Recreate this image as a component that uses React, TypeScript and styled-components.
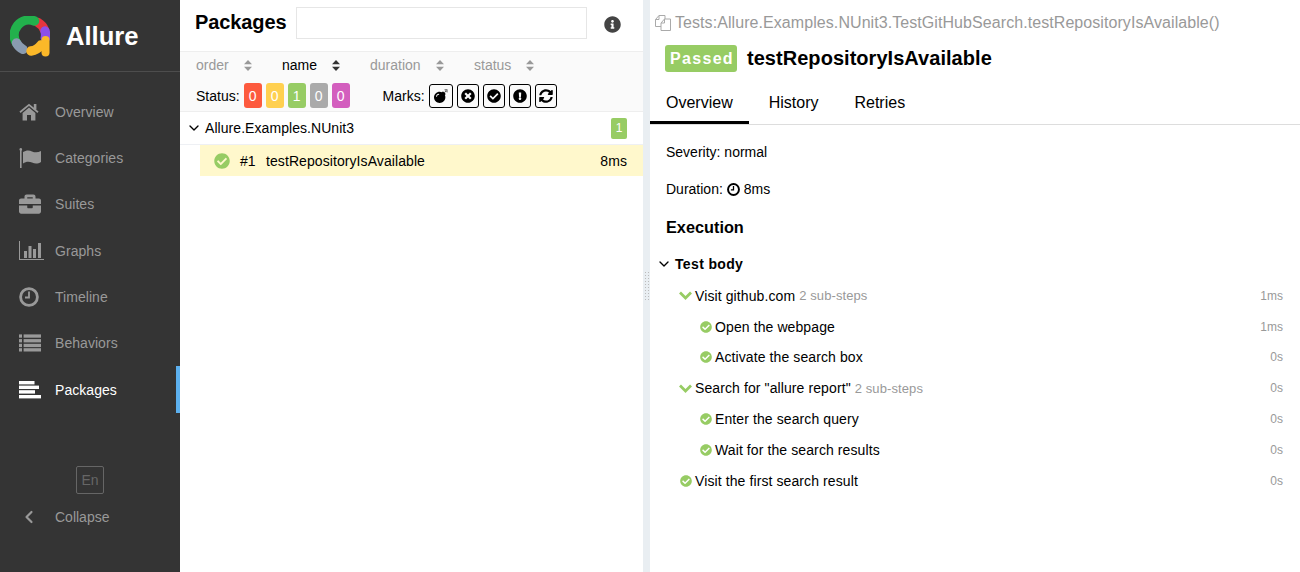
import React from 'react';
import styled, { createGlobalStyle } from 'styled-components';
import {
    FaBomb,
    FaBriefcase,
    FaCheckCircle,
    FaExclamationCircle,
    FaInfoCircle,
    FaSyncAlt,
    FaTimesCircle,
} from 'react-icons/fa';
import { FiChevronDown, FiChevronLeft } from 'react-icons/fi';

const GlobalStyle = createGlobalStyle`
    html, body, #root {
        margin: 0;
        height: 100%;
    }

    body {
        font-family: "Liberation Sans", Arial, sans-serif;
        font-size: 14px;
        color: #000;
        background: #fff;
    }
`;

const Page = styled.div`
    display: flex;
    width: 1300px;
    height: 572px;
    overflow: hidden;
`;

const Sidebar = styled.aside`
    display: flex;
    flex-direction: column;
    flex: 0 0 180px;
    background: #343434;
`;

const Brand = styled.div`
    display: flex;
    align-items: center;
    gap: 16px;
    height: 72px;
    padding: 2px 0 0 10px;
    box-sizing: border-box;
    border-bottom: 1px solid #4d4d4d;
    color: #fff;
    font-size: 25.6px;
    font-weight: bold;
`;

const Menu = styled.nav`
    display: flex;
    flex-direction: column;
    padding-top: 16.5px;
`;

const MenuItem = styled.div<{ $active?: boolean }>`
    display: flex;
    align-items: center;
    height: 46.33px;
    padding-left: 19px;
    box-sizing: border-box;
    color: ${props => (props.$active ? '#fff' : '#999')};
    letter-spacing: 0.05px;
    border-right: 4px solid ${props => (props.$active ? '#5cb0ee' : 'transparent')};
`;

const MenuIcon = styled.span`
    display: flex;
    align-items: center;
    width: 36px;
    font-size: 22px;
`;

const SidebarFooter = styled.div`
    display: flex;
    flex-direction: column;
    align-items: center;
    margin-top: auto;
    padding-bottom: 45px;
`;

const LangButton = styled.div`
    display: flex;
    align-items: center;
    justify-content: center;
    width: 26px;
    height: 26px;
    border: 1px solid #666;
    border-radius: 2px;
    color: #666;
    font-size: 14px;
`;

const CollapseRow = styled.div`
    display: flex;
    align-items: center;
    align-self: stretch;
    height: 20px;
    margin-top: 13px;
    padding-left: 19px;
    color: #999;
`;

const CollapseIcon = styled.span`
    display: flex;
    width: 36px;
    font-size: 20px;

    svg {
        stroke-width: 2.6;
    }
`;

const TreePane = styled.section`
    display: flex;
    flex-direction: column;
    flex: 0 0 463px;
`;

const TreeHeader = styled.header`
    display: flex;
    align-items: flex-start;
    height: 51px;
    padding: 7px 0 0 15px;
    box-sizing: border-box;
`;

const TreeTitle = styled.h2`
    width: 101px;
    margin: 0;
    font-size: 20px;
    font-weight: bold;
    line-height: 30px;
    letter-spacing: -0.1px;
`;

const SearchBox = styled.input`
    width: 291px;
    height: 32px;
    padding: 0;
    box-sizing: border-box;
    border: 1px solid #e6e6e6;
    background: #fff;
`;

const InfoButton = styled.span`
    display: flex;
    margin: 9px 0 0 17px;
    color: #444;
    font-size: 17px;
`;

const Controls = styled.div`
    height: 61px;
    box-sizing: border-box;
    background: #fafafa;
    border-top: 1px solid #eee;
    border-bottom: 1px solid #eee;
`;

const SortRow = styled.div`
    display: flex;
    align-items: center;
    height: 26px;
`;

const SortItem = styled.span<{ $active?: boolean; $width: number; $gap: number }>`
    display: flex;
    align-items: center;
    justify-content: space-between;
    width: ${props => props.$width}px;
    margin-left: ${props => props.$gap}px;
    color: ${props => (props.$active ? '#000' : '#999')};

    svg {
        color: ${props => (props.$active ? '#333' : '#999')};
    }
`;

const FilterRow = styled.div`
    display: flex;
    align-items: center;
    height: 33px;
    padding: 2px 0 0 16px;
    box-sizing: border-box;
`;

const FilterLabel = styled.span<{ $gap?: number }>`
    margin-left: ${props => props.$gap ?? 0}px;
    margin-right: 4px;
`;

const StatusBadge = styled.span<{ $color: string }>`
    display: flex;
    align-items: center;
    justify-content: center;
    width: 18px;
    height: 25px;
    margin-right: 4px;
    border-radius: 3px;
    background: ${props => props.$color};
    color: #fff;
`;

const MarkButton = styled.span<{ $wide?: boolean }>`
    display: flex;
    align-items: center;
    justify-content: center;
    width: ${props => (props.$wide ? 24 : 22)}px;
    height: 24px;
    margin-right: 4px;
    box-sizing: border-box;
    border: 1px solid #000;
    border-radius: 3px;
    font-size: 14px;
`;

const GroupRow = styled.div`
    display: flex;
    align-items: center;
    height: 32px;
    padding-left: 6px;
    padding-right: 16px;
    letter-spacing: 0.06px;
    border-bottom: 1px solid #eef0f4;
`;

const Caret = styled.span`
    display: flex;
    width: 19px;
    font-size: 16px;
`;

const GroupCount = styled.span`
    display: flex;
    align-items: center;
    justify-content: center;
    width: 16px;
    height: 21px;
    margin-left: auto;
    border-radius: 2px;
    background: #97cc64;
    color: #fff;
    font-size: 12px;
`;

const TestRow = styled.div`
    display: flex;
    align-items: center;
    height: 31px;
    margin-left: 20px;
    padding: 0 16px 0 14px;
    background: #fff8cc;
    letter-spacing: 0.08px;
`;

const TestStatus = styled.span`
    display: flex;
    width: 26px;
    color: #97cc64;
    font-size: 16px;
`;

const TestOrder = styled.span`
    width: 26px;
`;

const TestDuration = styled.span`
    margin-left: auto;
`;

const Gutter = styled.div`
    position: relative;
    flex: 0 0 7px;
    background: #e9eef2;
`;

const GutterGrip = styled.div`
    position: absolute;
    top: 271px;
    left: 1px;
    width: 5px;
    height: 30px;
    background-image: radial-gradient(#bbb 1px, transparent 1px);
    background-size: 3px 3px;
`;

const DetailPane = styled.main`
    display: flex;
    flex-direction: column;
    flex: 1;
    min-width: 0;
`;

const BreadCrumb = styled.div`
    display: flex;
    align-items: center;
    gap: 4px;
    height: 20px;
    margin-top: 13px;
    padding-left: 5px;
    color: #999;
    font-size: 16px;
    letter-spacing: 0.07px;
`;

const TitleRow = styled.div`
    display: flex;
    align-items: center;
    gap: 10px;
    margin-top: 12px;
    padding-left: 15px;
`;

const PassedBadge = styled.span`
    display: flex;
    align-items: center;
    justify-content: center;
    width: 72px;
    height: 27px;
    padding: 1px 0 0 2px;
    box-sizing: border-box;
    border-radius: 3px;
    background: #97cc64;
    color: #fff;
    font-size: 16px;
    font-weight: bold;
    letter-spacing: 1.3px;
`;

const TestTitle = styled.h2`
    margin: 0;
    font-size: 20px;
    font-weight: bold;
    letter-spacing: 0.04px;
`;

const Tabs = styled.div`
    display: flex;
    height: 39px;
    margin-top: 13px;
    border-bottom: 1px solid #ddd;
`;

const Tab = styled.div<{ $active?: boolean }>`
    display: flex;
    align-items: center;
    justify-content: center;
    height: 39px;
    padding: 0 16px 0 ${props => (props.$active ? 16 : 20)}px;
    box-sizing: border-box;
    font-size: 16px;
    border-bottom: 3px solid ${props => (props.$active ? '#000' : 'transparent')};
`;

const Overview = styled.div`
    display: flex;
    flex-direction: column;
    padding: 17px 17px 0 16px;
`;

const InfoLine = styled.div`
    display: flex;
    align-items: center;
    gap: 4px;
    height: 20px;
    margin-bottom: 17px;

    & + & {
        margin-bottom: 18px;
    }
`;

const SectionTitle = styled.h3`
    margin: 0;
    font-size: 16.3px;
    font-weight: bold;
    height: 20px;
    line-height: 20px;
`;

const BodyHeader = styled.div`
    display: flex;
    align-items: center;
    height: 20px;
    margin: 17px 0 11.8px -10px;
    font-weight: bold;
    letter-spacing: 0.35px;
`;

const StepRow = styled.div<{ $depth: number }>`
    display: flex;
    align-items: center;
    height: 20px;
    margin-bottom: 10.8px;
    padding-left: ${props => 13 + props.$depth * 20}px;
    letter-spacing: 0.1px;
`;

const StepIcon = styled.span`
    display: flex;
    justify-content: center;
    width: 13px;
    margin-right: 3px;
    color: #97cc64;
    font-size: 12px;
`;

const SubSteps = styled.span`
    margin-left: 4px;
    color: #999;
    font-size: 13px;
`;

const StepTime = styled.span`
    margin-left: auto;
    color: #999;
    font-size: 12px;
    letter-spacing: 0;
`;

function HomeIcon(): JSX.Element {
    return (
        <svg width="20" height="18" viewBox="0 0 20 18" fill="currentColor">
            <path d="M1 9.2 L10 1.8 L19 9.2" fill="none" stroke="currentColor" strokeWidth="1.8" />
            <rect x="14.8" y="1" width="2.6" height="5.5" />
            <path d="M3.6 10 L10 4.6 L16.4 10 V17.5 H12 V12 H8 V17.5 H3.6 Z" />
        </svg>
    );
}

function FlagIcon(): JSX.Element {
    return (
        <svg width="22" height="20" viewBox="0 0 22 20" fill="currentColor">
            <rect x="1" y="1" width="1.6" height="19" />
            <circle cx="1.8" cy="1.4" r="1.3" />
            <path d="M4 4 C 7 2 10.5 2 13 3.4 C 16 4.8 19 4.6 22 3 L22 14 C 19 16 16 16 13 14.6 C 10.5 13.2 7 13.2 4 15.4 Z" />
        </svg>
    );
}

function GraphsIcon(): JSX.Element {
    return (
        <svg width="25" height="20" viewBox="0 0 25 20" fill="currentColor">
            <rect x="0" y="0" width="1" height="19" />
            <rect x="0" y="18" width="25" height="1" />
            <rect x="5" y="10" width="3" height="7" />
            <rect x="9.5" y="5" width="3" height="12" />
            <rect x="14" y="8" width="3" height="9" />
            <rect x="19" y="2" width="3" height="15" />
        </svg>
    );
}

function ClockIcon({ size = 20, stroke = 2.8 }: { size?: number; stroke?: number }): JSX.Element {
    return (
        <svg width={size} height={size} viewBox="0 0 20 20" fill="none" stroke="currentColor">
            <circle cx="10" cy="10" r="8.4" strokeWidth={stroke} />
            <path d="M6 10.5 H10 V4.5" strokeWidth={stroke * 0.65} />
        </svg>
    );
}

function BehaviorsIcon(): JSX.Element {
    return (
        <svg width="22" height="18" viewBox="0 0 22 18" fill="currentColor">
            {[0.4, 5.1, 9.8, 14.2].map(y => (
                <React.Fragment key={y}>
                    <rect x="0" y={y} width="3" height="3.3" />
                    <rect x="4.6" y={y} width="17.4" height="3.3" />
                </React.Fragment>
            ))}
        </svg>
    );
}

function PackagesIcon(): JSX.Element {
    return (
        <svg width="22" height="20" viewBox="0 0 22 20" fill="currentColor">
            <rect x="0" y="1" width="15.5" height="3.4" />
            <rect x="0" y="5.6" width="20" height="3.4" />
            <rect x="0" y="10.2" width="16" height="3.4" />
            <rect x="0" y="15" width="22" height="3.4" />
        </svg>
    );
}

function SortIcon(): JSX.Element {
    return (
        <svg width="8" height="11" viewBox="0 0 8 11" fill="currentColor">
            <path d="M4 0 L8 4.3 H0 Z" />
            <path d="M4 11 L8 6.7 H0 Z" />
        </svg>
    );
}

function CopyIcon(): JSX.Element {
    return (
        <svg width="16" height="16" viewBox="0 0 16 16" fill="none" stroke="#aaa" strokeWidth="1">
            <path d="M6 11.5 H0.5 V4.5 L4 0.5 H10 V4" />
            <path d="M4 0.5 V4.5 H0.5" />
            <path d="M6 15.5 V8 L9.5 4 H15.5 V15.5 Z" fill="#fff" />
            <path d="M9.5 4 V8 H6" />
        </svg>
    );
}

function ChevronIcon(): JSX.Element {
    return (
        <svg width="13" height="9" viewBox="0 0 13 9" fill="none" stroke="currentColor" strokeWidth="2.8">
            <path d="M1 1.6 L6.5 7 L12 1.6" />
        </svg>
    );
}

function Logo(): JSX.Element {
    return (
        <svg width="40" height="41" viewBox="0 0 40 41" fill="none" strokeWidth="9.4" strokeLinecap="round">
            <path d="M28 6.5 A15 15 0 0 1 34.5 14" stroke="#e5353d" />
            <path d="M24.5 5 A15 15 0 0 0 6.5 27" stroke="#22b14c" />
            <path d="M35 15 A15 15 0 0 1 35.3 22" stroke="#8c4fe8" />
            <path d="M6.5 27 A15 15 0 0 0 13 33.4" stroke="#8a9bb0" />
            <path d="M21 35 A15 15 0 0 0 31 29" stroke="#fbb829" />
            <path d="M35.5 24 V36.5" stroke="#fbb829" strokeWidth="8" />
        </svg>
    );
}

const menuItems = [
    { label: 'Overview', icon: <HomeIcon /> },
    { label: 'Categories', icon: <FlagIcon /> },
    { label: 'Suites', icon: <FaBriefcase /> },
    { label: 'Graphs', icon: <GraphsIcon /> },
    { label: 'Timeline', icon: <ClockIcon /> },
    { label: 'Behaviors', icon: <BehaviorsIcon /> },
    { label: 'Packages', icon: <PackagesIcon />, active: true },
];

const steps = [
    { depth: 1, name: 'Visit github.com', sub: '2 sub-steps', time: '1ms', open: true },
    { depth: 2, name: 'Open the webpage', time: '1ms' },
    { depth: 2, name: 'Activate the search box', time: '0s' },
    { depth: 1, name: 'Search for "allure report"', sub: '2 sub-steps', time: '0s', open: true },
    { depth: 2, name: 'Enter the search query', time: '0s' },
    { depth: 2, name: 'Wait for the search results', time: '0s' },
    { depth: 1, name: 'Visit the first search result', time: '0s' },
];

export default function App(): JSX.Element {
    return (
        <Page>
            <GlobalStyle />
            <Sidebar>
                <Brand>
                    <Logo />
                    Allure
                </Brand>
                <Menu>
                    {menuItems.map(item => (
                        <MenuItem key={item.label} $active={item.active}>
                            <MenuIcon>{item.icon}</MenuIcon>
                            {item.label}
                        </MenuItem>
                    ))}
                </Menu>
                <SidebarFooter>
                    <LangButton>En</LangButton>
                    <CollapseRow>
                        <CollapseIcon>
                            <FiChevronLeft />
                        </CollapseIcon>
                        Collapse
                    </CollapseRow>
                </SidebarFooter>
            </Sidebar>
            <TreePane>
                <TreeHeader>
                    <TreeTitle>Packages</TreeTitle>
                    <SearchBox />
                    <InfoButton>
                        <FaInfoCircle />
                    </InfoButton>
                </TreeHeader>
                <Controls>
                    <SortRow>
                        <SortItem $width={56} $gap={16}>
                            order <SortIcon />
                        </SortItem>
                        <SortItem $active $width={58} $gap={30}>
                            name <SortIcon />
                        </SortItem>
                        <SortItem $width={74} $gap={30}>
                            duration <SortIcon />
                        </SortItem>
                        <SortItem $width={60} $gap={30}>
                            status <SortIcon />
                        </SortItem>
                    </SortRow>
                    <FilterRow>
                        <FilterLabel>Status:</FilterLabel>
                        <StatusBadge $color="#fd5a3e">0</StatusBadge>
                        <StatusBadge $color="#ffd050">0</StatusBadge>
                        <StatusBadge $color="#97cc64">1</StatusBadge>
                        <StatusBadge $color="#aaa">0</StatusBadge>
                        <StatusBadge $color="#d35ebe">0</StatusBadge>
                        <FilterLabel $gap={29}>Marks:</FilterLabel>
                        <MarkButton $wide>
                            <FaBomb />
                        </MarkButton>
                        <MarkButton>
                            <FaTimesCircle />
                        </MarkButton>
                        <MarkButton>
                            <FaCheckCircle />
                        </MarkButton>
                        <MarkButton>
                            <FaExclamationCircle />
                        </MarkButton>
                        <MarkButton>
                            <FaSyncAlt />
                        </MarkButton>
                    </FilterRow>
                </Controls>
                <GroupRow>
                    <Caret>
                        <FiChevronDown />
                    </Caret>
                    Allure.Examples.NUnit3
                    <GroupCount>1</GroupCount>
                </GroupRow>
                <TestRow>
                    <TestStatus>
                        <FaCheckCircle />
                    </TestStatus>
                    <TestOrder>#1</TestOrder>
                    testRepositoryIsAvailable
                    <TestDuration>8ms</TestDuration>
                </TestRow>
            </TreePane>
            <Gutter>
                <GutterGrip />
            </Gutter>
            <DetailPane>
                <BreadCrumb>
                    <CopyIcon />
                    Tests:Allure.Examples.NUnit3.TestGitHubSearch.testRepositoryIsAvailable()
                </BreadCrumb>
                <TitleRow>
                    <PassedBadge>Passed</PassedBadge>
                    <TestTitle>testRepositoryIsAvailable</TestTitle>
                </TitleRow>
                <Tabs>
                    <Tab $active>Overview</Tab>
                    <Tab>History</Tab>
                    <Tab>Retries</Tab>
                </Tabs>
                <Overview>
                    <InfoLine>Severity: normal</InfoLine>
                    <InfoLine>
                        Duration: <ClockIcon size={13} stroke={3} /> 8ms
                    </InfoLine>
                    <SectionTitle>Execution</SectionTitle>
                    <BodyHeader>
                        <Caret>
                            <FiChevronDown />
                        </Caret>
                        Test body
                    </BodyHeader>
                    {steps.map(step => (
                        <StepRow key={step.name} $depth={step.depth - 1}>
                            <StepIcon>{step.open ? <ChevronIcon /> : <FaCheckCircle />}</StepIcon>
                            {step.name}
                            {step.sub && <SubSteps>{step.sub}</SubSteps>}
                            <StepTime>{step.time}</StepTime>
                        </StepRow>
                    ))}
                </Overview>
            </DetailPane>
        </Page>
    );
}
